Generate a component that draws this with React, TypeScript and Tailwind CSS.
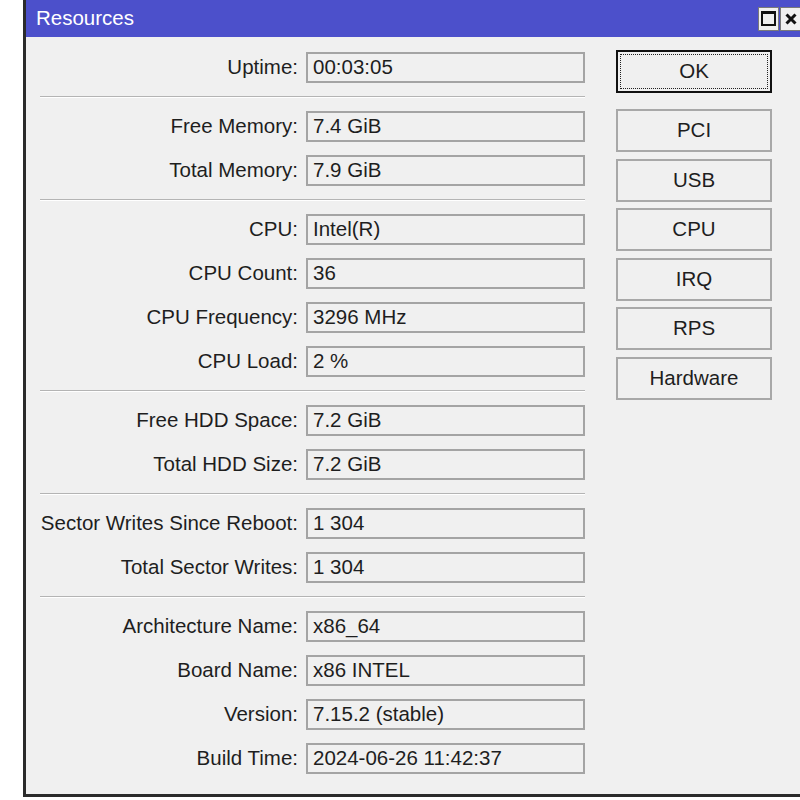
import React from 'react';

type Row = { label: string; value: string };

const groups: Row[][] = [
  [{ label: 'Uptime', value: '00:03:05' }],
  [
    { label: 'Free Memory', value: '7.4 GiB' },
    { label: 'Total Memory', value: '7.9 GiB' },
  ],
  [
    { label: 'CPU', value: 'Intel(R)' },
    { label: 'CPU Count', value: '36' },
    { label: 'CPU Frequency', value: '3296 MHz' },
    { label: 'CPU Load', value: '2 %' },
  ],
  [
    { label: 'Free HDD Space', value: '7.2 GiB' },
    { label: 'Total HDD Size', value: '7.2 GiB' },
  ],
  [
    { label: 'Sector Writes Since Reboot', value: '1 304' },
    { label: 'Total Sector Writes', value: '1 304' },
  ],
  [
    { label: 'Architecture Name', value: 'x86_64' },
    { label: 'Board Name', value: 'x86 INTEL' },
    { label: 'Version', value: '7.15.2 (stable)' },
    { label: 'Build Time', value: '2024-06-26 11:42:37' },
  ],
];

const buttons = ['PCI', 'USB', 'CPU', 'IRQ', 'RPS', 'Hardware'];

function Field({ label, value }: Row) {
  return (
    <div className="flex items-center">
      <div className="w-[280px] pr-[8px] text-right whitespace-nowrap">{label}:</div>
      <div className="w-[279px] h-[31px] border-2 border-[#a4a4a4] bg-[#f0f0f0] flex items-center px-[5px] whitespace-nowrap">
        {value}
      </div>
    </div>
  );
}

export default function App() {
  return (
    <div
      className="w-[800px] h-[800px] bg-white overflow-hidden text-[#1e1e1e]"
      style={{ fontFamily: '"Liberation Sans", Arial, sans-serif' }}
    >
      <div className="ml-[23px] w-[800px] h-[797px] border-l-[3px] border-b-[3px] border-[#2b2b2b] flex flex-col">
        {/* title bar */}
        <div className="h-[37px] bg-[#4c50cb] flex items-center justify-between shrink-0">
          <span className="pl-[10px] text-white text-[20.5px]">Resources</span>
          <div className="flex items-center gap-[1px] mr-[22px]">
            <div className="w-[21px] h-[24px] bg-[#f0f0f0] border border-[#7a7a7a] flex items-center justify-center">
              <div className="w-[15px] h-[15px] border-2 border-t-[3px] border-[#111]" />
            </div>
            <div className="w-[21px] h-[24px] bg-[#f0f0f0] border border-[#7a7a7a] flex items-center justify-center">
              <svg width="12" height="12" viewBox="0 0 12 12">
                <path d="M1.5 1.5 L10.5 10.5 M10.5 1.5 L1.5 10.5" stroke="#111" strokeWidth="3" />
              </svg>
            </div>
          </div>
        </div>

        {/* body */}
        <div className="flex-1 bg-[#f0f0f0] flex pt-[15px] text-[20.5px]">
          <div className="flex flex-col w-[562px]">
            {groups.map((g, gi) => (
              <div key={gi}>
                {gi > 0 && (
                  <div className="ml-[14px] w-[545px] mt-[13px] mb-[13px] border-t border-b border-t-[#b4b4b4] border-b-white" />
                )}
                <div className="flex flex-col gap-[13px]">
                  {g.map((r) => (
                    <Field key={r.label} label={r.label} value={r.value} />
                  ))}
                </div>
              </div>
            ))}
          </div>

          <div className="ml-[28px] mt-[-2px] flex flex-col w-[156px]">
            <div className="relative h-[43px] border-2 border-[#111] bg-[#f0f0f0] flex items-center justify-center">
              <div className="absolute inset-[2px] border border-dotted border-[#222]" />
              OK
            </div>
            <div className="mt-[16px] flex flex-col gap-[6.5px]">
              {buttons.map((b) => (
                <div
                  key={b}
                  className="h-[43px] border-2 border-[#a8a8a8] bg-[#f0f0f0] flex items-center justify-center"
                >
                  {b}
                </div>
              ))}
            </div>
          </div>
        </div>
      </div>
    </div>
  );
}
